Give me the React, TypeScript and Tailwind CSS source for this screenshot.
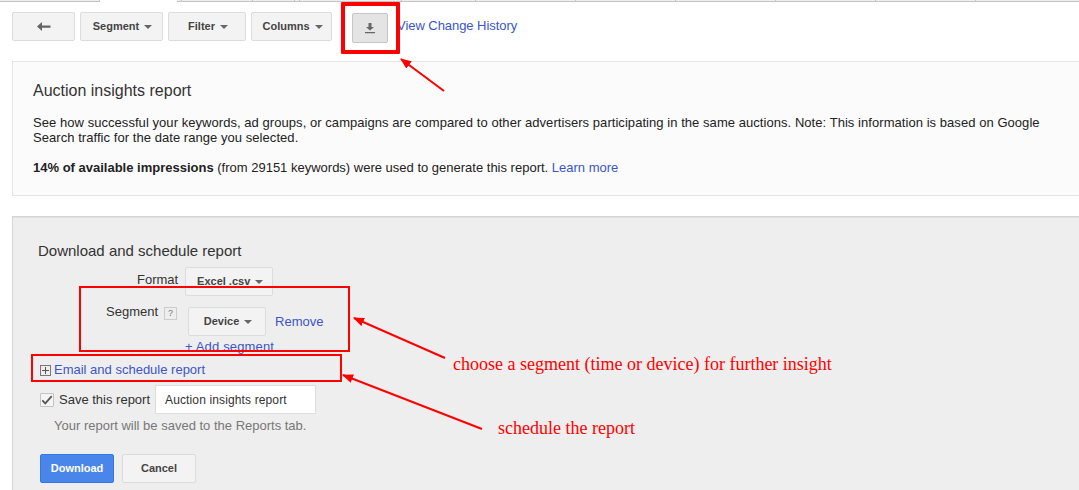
import React from "react";

function Caret() {
  return <span className="ml-[5px] inline-block h-0 w-0 border-x-[4px] border-t-[4px] border-x-transparent border-t-[#666] align-middle" />;
}

function Btn({ className, children }: { className: string; children: React.ReactNode }) {
  return (
    <div className={`flex h-[29px] items-center justify-center rounded-[2px] border border-[#dcdcdc] bg-[#f3f3f3] text-[11px] font-bold text-[#444] ${className}`}>
      {children}
    </div>
  );
}

const leftTabs = [100];
const rightTabs = [5, 71, 42, 5, 102, 74, 100, 100, 100, 100, 100];

export default function App() {
  return (
    <div className="relative h-[490px] w-[1079px] overflow-hidden bg-white font-['Liberation_Sans',Arial,sans-serif] text-[13px] text-[#222]">
      <div className="flex h-[2px]">
        {leftTabs.map((w, i) => (
          <div key={i} style={{ width: w }} className="h-[2px] shrink-0 border-b border-r border-[#c4c4c4] bg-[#eee]" />
        ))}
        <div className="w-[77px] shrink-0" />
        <div className="flex h-[2px] flex-1 overflow-hidden border-b border-[#c4c4c4] bg-[#eee]">
          {rightTabs.map((w, i) => (
            <div key={i} style={{ width: w }} className="h-full shrink-0 border-r border-[#c4c4c4]" />
          ))}
        </div>
      </div>
      <div className="flex h-[59px] items-start pl-3 pt-[10px]">
        <Btn className="w-[63px]">
          <svg width="14" height="10" viewBox="0 0 14 10"><path d="M5 0v3.5h8.5v2.2H5V9L0 4.6z" fill="#666" /></svg>
        </Btn>
        <Btn className="ml-[5px] w-[83px] pl-[2px]">Segment<Caret /></Btn>
        <Btn className="ml-[5px] w-[78px] pl-[2px]">Filter<Caret /></Btn>
        <Btn className="ml-[5px] w-[81px] pl-[2px]">Columns<Caret /></Btn>
        <div className="ml-[20px] mt-[1px] flex h-[30px] w-[36px] items-center justify-center rounded-[2px] border border-[#c6c6c6] bg-[#e4e4e4]">
          <svg width="12" height="12" viewBox="0 0 12 12"><path d="M4.5 1h3v4H10L6 8.5 2 5h2.5zM1 10h10v1.2H1z" fill="#666" /></svg>
        </div>
        <a className="ml-[9px] mt-[4px] tracking-[-0.05px] text-[#3b55c9]">View Change History</a>
      </div>
      <section className="ml-3 h-[135px] border-y border-l border-[#e5e5e5] bg-[#fbfbfb] pl-5 pt-[18px]">
        <h2 className="text-[16px] leading-[22px] text-[#333]">Auction insights report</h2>
        <p className="mt-[13px] w-[1030px] leading-[15px] tracking-[0.053px]">See how successful your keywords, ad groups, or campaigns are compared to other advertisers participating in the same auctions. Note: This information is based on Google Search traffic for the date range you selected.</p>
        <p className="mt-[15px] leading-[16px]"><b>14% of available impressions</b> (from 29151 keywords) were used to generate this report. <a className="text-[#3b55c9]">Learn more</a></p>
      </section>
      <section className="ml-3 mt-5 h-[280px] border-l border-t border-[#d4d4d4] bg-[#eee] pl-[25px] pt-[24px] shadow-[inset_0_1px_0_#e2e2e2]">
        <h3 className="text-[15px] leading-[20px] text-[#333]">Download and schedule report</h3>
        <div className="flex items-start">
          <span className="ml-[99px] mt-[9px] text-[#333]">Format</span>
          <Btn className="ml-[7px] mt-[6px] w-[88px] pl-[2px]">Excel .csv<Caret /></Btn>
        </div>
        <div className="mt-[5px] flex items-start">
          <span className="ml-[68px] mt-[1px] text-[#333]">Segment</span>
          <span className="ml-[6px] mt-[6px] flex h-[13px] w-[13px] items-center justify-center border border-[#ccc] text-[9px] text-[#777]">?</span>
          <Btn className="ml-[11px] mt-[6px] w-[78px] pl-[2px]">Device<Caret /></Btn>
          <a className="ml-[9px] mt-[11px] text-[#3b55c9]">Remove</a>
        </div>
        <a className="ml-[147px] mt-[3px] block leading-[15px] tracking-[0.15px] text-[#3b55c9]">+ Add segment</a>
        <div className="mt-[8px] flex items-center leading-[16px]">
          <span className="relative ml-[2px] mr-[3px] h-[11px] w-[11px] border border-[#777] bg-[#eee]">
            <span className="absolute left-[1px] top-[4px] h-px w-[7px] bg-[#555]" />
            <span className="absolute left-[4px] top-[1px] h-[7px] w-px bg-[#555]" />
          </span>
          <a className="text-[#3b55c9]">Email and schedule report</a>
        </div>
        <div className="mt-[7px] flex items-center">
          <span className="ml-[2px] flex h-[14px] w-[14px] items-center justify-center rounded-[1px] border border-[#c4c4c4] bg-[#f4f4f4]">
            <svg width="14" height="12" viewBox="0 0 14 12"><path d="M1.5 6.5 5 10 12.5 1.5" fill="none" stroke="#555" strokeWidth="2" /></svg>
          </span>
          <span className="ml-[5px] text-[#333]">Save this report</span>
          <div className="ml-[5px] flex h-[29px] w-[161px] items-center border border-[#ddd] bg-white pl-[9px] text-[12px] tracking-[0.13px] text-[#333]">Auction insights report</div>
        </div>
        <p className="ml-[16px] mt-[4px] text-[13px] leading-[16px] text-[#777]">Your report will be saved to the Reports tab.</p>
        <div className="ml-[2px] mt-[20px] flex">
          <div className="flex h-[29px] w-[74px] items-center justify-center rounded-[2px] border border-[#3079ed] bg-[#4a86ea] text-[11px] font-bold text-white">Download</div>
          <Btn className="ml-2 w-[74px]">Cancel</Btn>
        </div>
      </section>

      {/* annotations over the screenshot */}
      <div className="absolute left-[341px] top-[2px] h-[52px] w-[59px] rounded-[1px] border-[4px] border-[#f00]" />
      <div className="absolute left-[79px] top-[286px] h-[66px] w-[271px] border-2 border-[#f00]" />
      <div className="absolute left-[31px] top-[354px] h-[28px] w-[311px] border-2 border-[#f00]" />
      <svg className="absolute left-0 top-0" width="1079" height="490">
        <defs>
          <marker id="ah" markerWidth="12" markerHeight="10" refX="10" refY="4.5" orient="auto" markerUnits="userSpaceOnUse">
            <path d="M0 0 11 4.5 0 9z" fill="#f00" />
          </marker>
        </defs>
        <g stroke="#f00" strokeWidth="2">
          <line x1="444" y1="91" x2="401" y2="59" markerEnd="url(#ah)" />
          <line x1="445" y1="358" x2="354" y2="318" markerEnd="url(#ah)" />
          <line x1="482" y1="429" x2="343" y2="375" markerEnd="url(#ah)" />
        </g>
      </svg>
      <span className="absolute left-[453px] top-[354px] font-['Liberation_Serif',serif] text-[18px] leading-[20px] text-[#f00]">choose a segment (time or device) for further insight</span>
      <span className="absolute left-[498px] top-[418px] font-['Liberation_Serif',serif] text-[18px] leading-[20px] text-[#f00]">schedule the report</span>
    </div>
  );
}
